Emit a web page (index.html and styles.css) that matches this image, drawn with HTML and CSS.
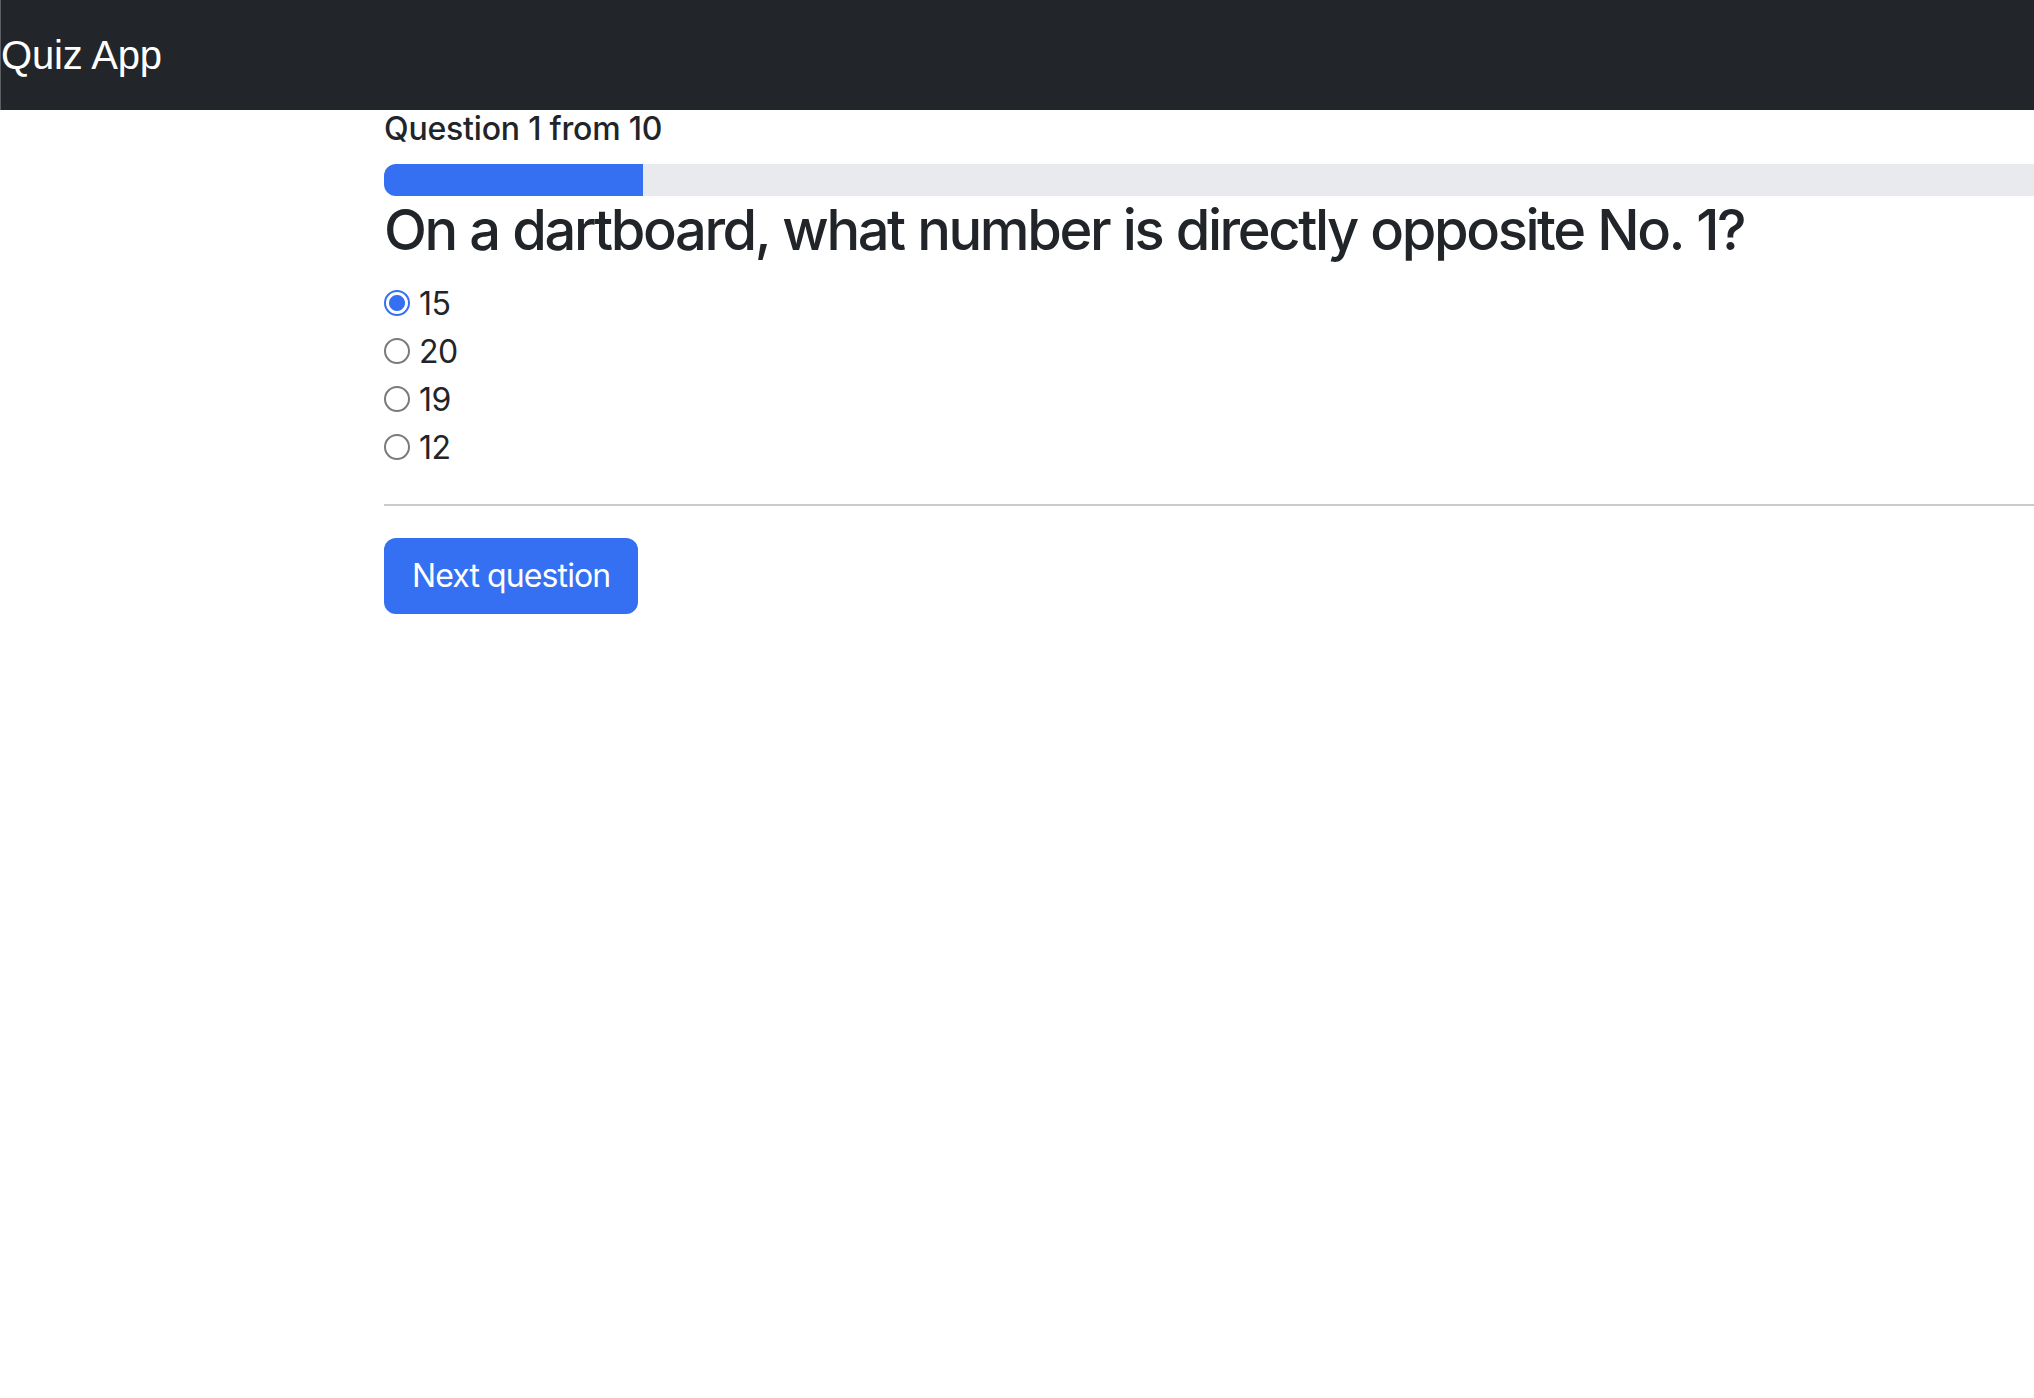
FILE: index.html
```html
<!DOCTYPE html>
<html lang="en">
<head>
<meta charset="utf-8">
<title>Quiz App</title>
<link rel="stylesheet" href="styles.css">
</head>
<body>
<header class="navbar">
  <span class="brand">Quiz App</span>
</header>
<main class="quiz">
  <div class="counter">Question 1 from 10</div>
  <div class="progress"><div class="progress-bar" style="width:10%"></div></div>
  <h3 class="question">On a dartboard, what number is directly opposite No. 1?</h3>
  <form class="options">
    <label class="option"><input type="radio" name="answer" checked><span>15</span></label>
    <label class="option"><input type="radio" name="answer"><span>20</span></label>
    <label class="option"><input type="radio" name="answer"><span>19</span></label>
    <label class="option"><input type="radio" name="answer"><span>12</span></label>
  </form>
  <hr class="divider">
  <button class="btn" type="button">Next question</button>
</main>
</body>
</html>
```
FILE: styles.css
```css
html, body {
  margin: 0;
  padding: 0;
  background: #ffffff;
  overflow-x: hidden;
}

body {
  font-family: Inter, "Noto Sans", sans-serif;
  font-size: 32px;
  line-height: 1.5;
  color: #212529;
}

.navbar {
  height: 110px;
  background: #222529;
  border-left: 1px solid #5c5f63;
  display: flex;
  align-items: center;
}

.brand {
  font-family: "Liberation Sans", Arial, sans-serif;
  font-size: 40px;
  line-height: 46px;
  color: #ffffff;
  letter-spacing: -0.2px;
}

.quiz {
  margin-left: 384px;
  width: 2590px;
}

.counter {
  font-weight: 500;
  line-height: 38px;
  letter-spacing: -0.2px;
}

.progress {
  margin-top: 16px;
  height: 32px;
  background: #e9eaee;
  border-radius: 12px;
  overflow: hidden;
  display: flex;
}

.progress-bar {
  background: #3470f1;
  height: 100%;
}

.question {
  margin: 1px 0 16px;
  font-size: 56px;
  font-weight: 550;
  line-height: 1.2;
  letter-spacing: -2.4px;
  word-spacing: 1px;
}

.options {
  display: flex;
  flex-direction: column;
  margin: 0;
}

.option {
  display: flex;
  align-items: center;
  height: 48px;
}

.option input {
  appearance: none;
  -webkit-appearance: none;
  width: 26px;
  height: 26px;
  margin: -3px 9px 0 0;
  border: 2px solid #7a7a7a;
  border-radius: 50%;
  background: #ffffff;
  box-sizing: border-box;
}

.option input:checked {
  border-color: #3470f1;
  background: radial-gradient(circle, #3470f1 0 7.5px, #ffffff 8.5px);
}

.option span {
  letter-spacing: -0.4px;
}

.divider {
  margin: 32px 0;
  border: 0;
  border-top: 2px solid #c9cacc;
  opacity: 1;
}

.btn {
  font-family: inherit;
  font-size: 32px;
  line-height: 48px;
  color: #ffffff;
  background: #3470f1;
  border: 2px solid #3470f1;
  border-radius: 12px;
  padding: 12px 26px;
  letter-spacing: -0.9px;
  cursor: pointer;
}
```
